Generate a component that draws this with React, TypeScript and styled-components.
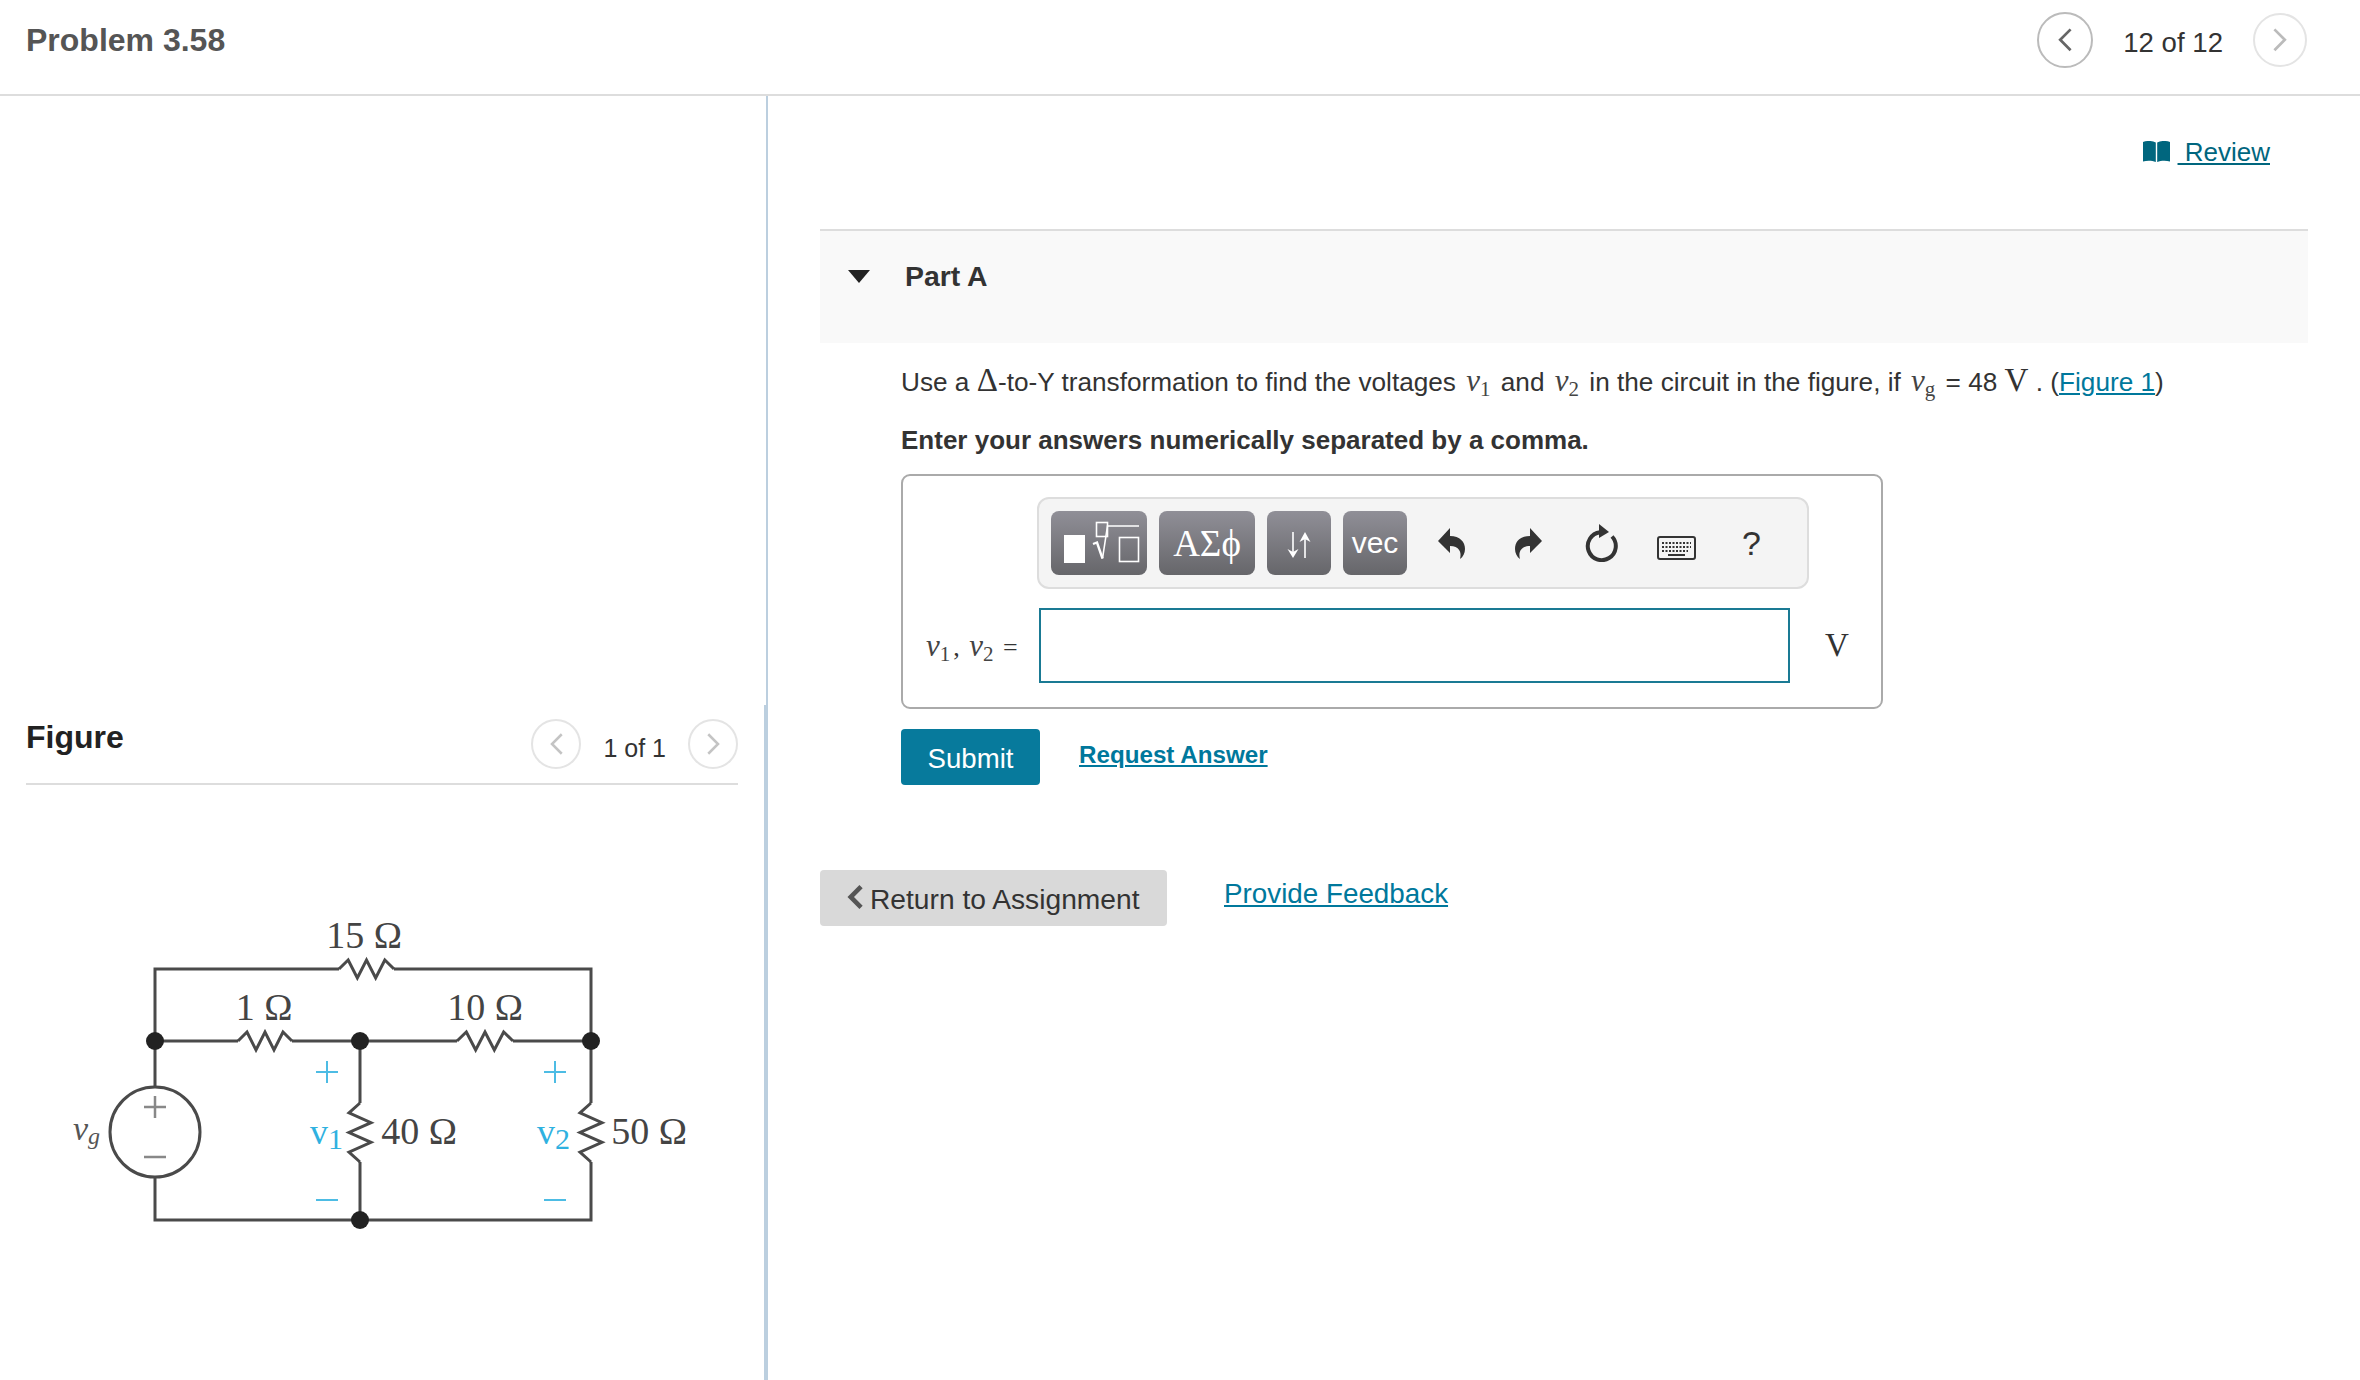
import React from "react";
import styled, { createGlobalStyle } from "styled-components";

const Global = createGlobalStyle`
  html, body { margin: 0; padding: 0; background: #fff; }
  body { font-family: "Liberation Sans", Arial, sans-serif; color: #333; }
  a { color: #00789c; }
`;

const Page = styled.div`
  width: 2360px;
  height: 1380px;
  display: flex;
  flex-direction: column;
  overflow: hidden;
`;

const Header = styled.header`
  flex: none;
  border-bottom: 2px solid #ddd;
  display: flex;
  align-items: center;
  justify-content: space-between;
  padding: 0 53px 14px 26px;
  height: 80px;
`;

const Title = styled.h1`
  margin: 0;
  font-size: 32px;
  line-height: 40px;
  font-weight: 700;
  color: #555;
`;

const Pager = styled.div<{ $gap: number }>`
  display: flex;
  align-items: center;
  gap: ${(p) => p.$gap}px;
`;

const PagerText = styled.span<{ $size: number; $drop: number }>`
  font-size: ${(p) => p.$size}px;
  line-height: 30px;
  color: #333;
  position: relative;
  top: ${(p) => p.$drop}px;
`;

const RoundButton = styled.button<{ $size: number; $enabled?: boolean }>`
  width: ${(p) => p.$size}px;
  height: ${(p) => p.$size}px;
  padding: 0;
  border-radius: 50%;
  background: #fff;
  border: 2px solid ${(p) => (p.$enabled ? "#bbb" : "#e4e4e4")};
  display: flex;
  align-items: center;
  justify-content: center;
  svg { display: block; }
`;

const Body = styled.div`
  flex: 1;
  display: grid;
  grid-template-columns: 768px 1fr;
  min-height: 0;
`;

const LeftPanel = styled.aside`
  border-right: 2px solid #bccfdf;
  padding-top: 609px;
  position: relative;
`;

const DividerThick = styled.span`
  position: absolute;
  right: -2px;
  top: 609px;
  bottom: 0;
  width: 4px;
  background: #bccfdf;
`;

const FigureHeader = styled.div`
  margin: 0 28px 0 26px;
  height: 78px;
  border-bottom: 2px solid #ddd;
  display: flex;
  align-items: center;
  justify-content: space-between;
`;

const FigureTitle = styled.h2`
  margin: -14px 0 0;
  font-size: 32px;
  line-height: 40px;
  font-weight: 700;
  color: #222;
`;

const FigureDrawing = styled.svg`
  display: block;
  margin: 95px 0 0 26px;
  width: 712px;
  height: 380px;
`;

const RightPanel = styled.main`
  padding: 0 52px;
`;

const ReviewRow = styled.div`
  display: flex;
  justify-content: flex-end;
  align-items: center;
  height: 133px;
  padding: 0 38px 21px 0;
  box-sizing: border-box;
`;

const BookIcon = styled.svg`
  width: 27px;
  height: 22px;
  margin-right: 8px;
`;

const ReviewLink = styled.a`
  font-size: 26px;
  line-height: 32px;
  color: #00667e;
  white-space: pre;
`;

const PartHeader = styled.div`
  height: 114px;
  box-sizing: border-box;
  background: #f9f9f9;
  border-top: 2px solid #ddd;
  display: flex;
  align-items: center;
  padding: 0 0 22px 28px;
`;

const Caret = styled.span`
  width: 0;
  height: 0;
  border-left: 11.5px solid transparent;
  border-right: 11.5px solid transparent;
  border-top: 13px solid #222;
  margin-right: 35px;
`;

const PartTitle = styled.h3`
  margin: 0;
  font-size: 28.4px;
  line-height: 34px;
  font-weight: 700;
  color: #333;
`;

const PartBody = styled.section`
  padding-left: 81px;
`;

const Question = styled.p`
  margin: 19px 0 0;
  font-size: 26.2px;
  line-height: 38px;
  height: 38px;
  color: #333;
  white-space: nowrap;
`;

const MathVar = styled.span`
  font-family: "Liberation Serif", "DejaVu Serif", serif;
  font-style: italic;
  font-size: 31px;
  color: #444;
  margin: 0 3px;
`;

const MathSub = styled.sub`
  font-family: "Liberation Serif", serif;
  font-style: normal;
  font-size: 21px;
  line-height: 0;
  vertical-align: -5px;
`;

const MathBig = styled.span`
  font-family: "Liberation Serif", "DejaVu Serif", serif;
  font-size: 33px;
  line-height: 0;
  color: #333;
`;

const Instruction = styled.p`
  margin: 21px 0 0;
  font-size: 26px;
  line-height: 38px;
  font-weight: 700;
  color: #333;
`;

const AnswerBox = styled.div`
  margin-top: 15px;
  width: 982px;
  height: 235px;
  box-sizing: border-box;
  border: 2px solid #aaa;
  border-radius: 9px;
  padding: 21px 0 0 134px;
`;

const Toolbar = styled.div`
  width: 772px;
  height: 92px;
  box-sizing: border-box;
  background: #f4f4f4;
  border: 2px solid #ddd;
  border-radius: 12px;
  display: flex;
  align-items: center;
  padding: 0 0 0 12px;
  gap: 12px;
`;

const ToolButton = styled.button<{ $w: number; $serif?: boolean }>`
  width: ${(p) => p.$w}px;
  height: 64px;
  flex: none;
  padding: 0;
  border: none;
  border-radius: 8px;
  background: linear-gradient(#908f97, #66666a);
  color: #fff;
  font-family: ${(p) => (p.$serif ? '"Liberation Serif", "DejaVu Serif", serif' : '"Liberation Sans", sans-serif')};
  font-size: ${(p) => (p.$serif ? 37 : 30)}px;
  display: flex;
  align-items: center;
  justify-content: center;
  svg { display: block; }
`;

const ToolIconGroup = styled.div`
  display: flex;
  margin-left: -5px;
`;

const ToolIconSlot = styled.span`
  width: 75px;
  height: 64px;
  flex: none;
  display: flex;
  align-items: center;
  justify-content: center;
  color: #333;
  font-size: 34px;
`;

const UndoGlyph = styled.svg<{ $flip?: boolean }>`
  width: 27px;
  height: 31px;
  margin-left: ${(p) => (p.$flip ? 4 : 0)}px;
  transform: ${(p) => (p.$flip ? "scaleX(-1)" : "none")};
`;

const KeyboardGlyph = styled.svg`
  width: 39px;
  height: 24px;
  margin-top: 9px;
`;

const InputRow = styled.div`
  display: flex;
  align-items: center;
  margin-top: 19px;
  margin-left: -134px;
`;

const EquationLabel = styled.label`
  width: 136px;
  box-sizing: border-box;
  padding: 0 0 0 20px;
  font-family: "Liberation Serif", serif;
  font-size: 26px;
  color: #333;
  white-space: nowrap;
`;

const AnswerInput = styled.div`
  width: 751px;
  height: 75px;
  box-sizing: border-box;
  border: 2px solid #1a7a94;
  background: #fff;
`;

const Unit = styled.span`
  margin-left: 35px;
  font-family: "Liberation Serif", serif;
  font-size: 33px;
  color: #333;
`;

const ActionRow = styled.div`
  display: flex;
  margin-top: 20px;
  gap: 39px;
`;

const SubmitButton = styled.button`
  width: 139px;
  height: 56px;
  border: none;
  border-radius: 4px;
  background: #077a9c;
  color: #fff;
  font-family: "Liberation Sans", sans-serif;
  font-size: 27.6px;
  padding: 3px 0 0;
`;

const RequestLink = styled.a`
  font-size: 24.2px;
  line-height: 34px;
  font-weight: 700;
  color: #00789c;
  text-decoration: underline;
  margin-top: 9px;
`;

const FooterRow = styled.div`
  display: flex;
  margin-top: 85px;
  gap: 57px;
`;

const ReturnButton = styled.button`
  width: 347px;
  height: 56px;
  border: none;
  border-radius: 4px;
  background: #d9d9d9;
  color: #333;
  font-family: "Liberation Sans", sans-serif;
  font-size: 28.2px;
  display: flex;
  align-items: center;
  padding: 2px 0 0 24px;
  gap: 6px;
  svg { display: block; margin-top: -4px; }
`;

const FeedbackLink = styled.a`
  font-size: 27.8px;
  line-height: 34px;
  color: #00789c;
  text-decoration: underline;
  margin-top: 7px;
`;

const Chevron = ({ dir, color, size }: { dir: "l" | "r"; color: string; size: number }) => (
  <svg width={size} height={size * 1.6} viewBox="0 0 10 16" fill="none" stroke={color} strokeWidth="1.7">
    <path d={dir === "l" ? "M8.5 1.5 2 8l6.5 6.5" : "M1.5 1.5 8 8l-6.5 6.5"} />
  </svg>
);

const zig = (x0: number, y0: number, len: number, amp: number, vertical: boolean) => {
  const n = 6;
  const pts: string[] = [];
  for (let i = 0; i <= n; i++) {
    const t = x0 + (len * i) / n;
    const offset = i === 0 || i === n ? 0 : i % 2 === 1 ? -amp : amp;
    pts.push(vertical ? `${y0 + offset},${t}` : `${t},${y0 + offset}`);
  }
  return pts.join(" ");
};

const wire = "#4a4a4a";
const cyan = "#2fb1e0";

const Label = ({ x, y, children }: { x: number; y: number; children: React.ReactNode }) => (
  <text x={x} y={y} fontFamily="Liberation Serif, serif" fontSize="38" fill="#444" textAnchor="middle">
    {children}
  </text>
);

const Circuit = () => (
  <FigureDrawing viewBox="26 880 712 380">
    <g fill="none" stroke={wire} strokeWidth="3">
      <path d="M155 1087V969H339M394 969H591V1103M591 1162V1220H155V1177M155 1041H238M292 1041H457M513 1041H591M360 1041V1103M360 1162V1220" />
      <polyline points={zig(339, 969, 55, 9, false)} />
      <polyline points={zig(238, 1041, 54, 9, false)} />
      <polyline points={zig(457, 1041, 56, 9, false)} />
      <polyline points={zig(1103, 360, 59, 11, true)} />
      <polyline points={zig(1103, 591, 59, 11, true)} />
      <circle cx="155" cy="1132" r="45" />
    </g>
    <g fill="#222">
      <circle cx="155" cy="1041" r="9" />
      <circle cx="360" cy="1041" r="9" />
      <circle cx="591" cy="1041" r="9" />
      <circle cx="360" cy="1220" r="9" />
    </g>
    <g stroke="#888" strokeWidth="2.5">
      <path d="M144 1107H166M155 1096V1118M144 1157H166" />
    </g>
    <g stroke={cyan} strokeWidth="2" opacity="0.85">
      <path d="M316 1072H338M327 1061V1083M544 1072H566M555 1061V1083M316 1200H338M544 1200H566" />
    </g>
    <Label x={364} y={948}>15 Ω</Label>
    <Label x={264} y={1020}>1 Ω</Label>
    <Label x={485} y={1020}>10 Ω</Label>
    <Label x={419} y={1144}>40 Ω</Label>
    <Label x={649} y={1144}>50 Ω</Label>
    <text x="73" y="1140" fontFamily="Liberation Serif, serif" fontStyle="italic" fontSize="34" fill="#555">
      v<tspan fontSize="24" dy="4">g</tspan>
    </text>
    <text x="310" y="1144" fontFamily="Liberation Serif, serif" fontSize="36" fill={cyan}>
      v<tspan fontSize="30" dy="5">1</tspan>
    </text>
    <text x="537" y="1144" fontFamily="Liberation Serif, serif" fontSize="36" fill={cyan}>
      v<tspan fontSize="30" dy="5">2</tspan>
    </text>
  </FigureDrawing>
);

const RootIcon = () => (
  <svg width="96" height="64" viewBox="0 0 96 64" fill="none" stroke="#fff" strokeWidth="1.6">
    <rect x="13" y="24" width="21" height="28" fill="#fff" stroke="none" />
    <rect x="45.5" y="11.5" width="11" height="14" />
    <path d="M42 33l4-1.5 5.500 16" strokeWidth="2.4" />
    <path d="M51.500 47.500 56.500 15H88" />
    <rect x="68.500" y="26.500" width="19" height="24" />
  </svg>
);

const ArrowsIcon = () => (
  <svg width="64" height="64" viewBox="0 0 64 64" fill="#fff" stroke="#fff" strokeWidth="1.6">
    <path d="M26 21V44" />
    <path d="M20.500 38 26 47 31.500 38 26 41Z" stroke="none" />
    <path d="M38 47V24" />
    <path d="M32.500 31 38 21 43.500 31 38 28Z" stroke="none" />
  </svg>
);

const UndoIcon = ({ flip }: { flip?: boolean }) => (
  <UndoGlyph viewBox="0 0 27 31" $flip={flip}>
    <path fill="#333" d="M0 13 12 0V8C22 8 27 14 27 21 27 25 25 29 22 31 24 24 21 18 12 18V25Z" />
  </UndoGlyph>
);

const ResetIcon = () => (
  <svg width="34" height="38" viewBox="0 0 34 38" fill="none">
    <path d="M15 8.200A14 14 0 1 0 27 12.500" stroke="#333" strokeWidth="4" />
    <path d="M14 0 24 8 14 14Z" fill="#333" />
  </svg>
);

const KeyboardIcon = () => (
  <KeyboardGlyph viewBox="0 0 39 24" fill="none">
    <rect x="1" y="1" width="37" height="22" rx="2" stroke="#333" strokeWidth="2" />
    <path d="M5 7H34M5 11H34M5 15H31" stroke="#333" strokeWidth="2" strokeDasharray="2 1.500" />
    <path d="M11 19H28" stroke="#333" strokeWidth="2" />
  </KeyboardGlyph>
);

const Book = () => (
  <BookIcon viewBox="0 0 27 22">
    <path fill="#00667e" d="M0 1C4-.5 9-.5 12.800 1.500V21C9 19.500 4 19.500 0 20.500ZM27 1C23-.5 18-.5 14.200 1.500V21C18 19.500 23 19.500 27 20.500Z" />
  </BookIcon>
);

const V = ({ n }: { n: string }) => (
  <MathVar>
    v<MathSub>{n}</MathSub>
  </MathVar>
);

export default function App() {
  return (
    <Page>
      <Global />
      <Header>
        <Title>Problem 3.58</Title>
        <Pager $gap={30}>
          <RoundButton $size={56} $enabled>
            <Chevron dir="l" color="#666" size={16} />
          </RoundButton>
          <PagerText $size={27.6} $drop={3}>12 of 12</PagerText>
          <RoundButton $size={54}>
            <Chevron dir="r" color="#bbb" size={16} />
          </RoundButton>
        </Pager>
      </Header>
      <Body>
        <LeftPanel>
          <DividerThick />
          <FigureHeader>
            <FigureTitle>Figure</FigureTitle>
            <Pager $gap={22}>
              <RoundButton $size={50}>
                <Chevron dir="l" color="#c4c4c4" size={15} />
              </RoundButton>
              <PagerText $size={25} $drop={4}>1 of 1</PagerText>
              <RoundButton $size={50}>
                <Chevron dir="r" color="#c4c4c4" size={15} />
              </RoundButton>
            </Pager>
          </FigureHeader>
          <Circuit />
        </LeftPanel>
        <RightPanel>
          <ReviewRow>
            <Book />
            <ReviewLink href="#"> Review</ReviewLink>
          </ReviewRow>
          <PartHeader>
            <Caret />
            <PartTitle>Part A</PartTitle>
          </PartHeader>
          <PartBody>
            <Question>
              Use a <MathBig>Δ</MathBig>-to-Y transformation to find the voltages <V n="1" /> and <V n="2" /> in the
              circuit in the figure, if <V n="g" /> = 48 <MathBig>V</MathBig> . (<a href="#">Figure 1</a>)
            </Question>
            <Instruction>Enter your answers numerically separated by a comma.</Instruction>
            <AnswerBox>
              <Toolbar>
                <ToolButton $w={96}><RootIcon /></ToolButton>
                <ToolButton $w={96} $serif>ΑΣϕ</ToolButton>
                <ToolButton $w={64}><ArrowsIcon /></ToolButton>
                <ToolButton $w={64}>vec</ToolButton>
                <ToolIconGroup>
                  <ToolIconSlot><UndoIcon /></ToolIconSlot>
                  <ToolIconSlot><UndoIcon flip /></ToolIconSlot>
                  <ToolIconSlot><ResetIcon /></ToolIconSlot>
                  <ToolIconSlot><KeyboardIcon /></ToolIconSlot>
                  <ToolIconSlot>?</ToolIconSlot>
                </ToolIconGroup>
              </Toolbar>
              <InputRow>
                <EquationLabel>
                  <V n="1" />, <V n="2" /> =
                </EquationLabel>
                <AnswerInput />
                <Unit>V</Unit>
              </InputRow>
            </AnswerBox>
            <ActionRow>
              <SubmitButton>Submit</SubmitButton>
              <RequestLink href="#">Request Answer</RequestLink>
            </ActionRow>
          </PartBody>
          <FooterRow>
            <ReturnButton>
              <svg width="20" height="26" viewBox="0 0 18 24">
                <path d="M14 1 3 12l11 11 3-3-8-8 8-8Z" fill="#555" />
              </svg>
              Return to Assignment
            </ReturnButton>
            <FeedbackLink href="#">Provide Feedback</FeedbackLink>
          </FooterRow>
        </RightPanel>
      </Body>
    </Page>
  );
}
